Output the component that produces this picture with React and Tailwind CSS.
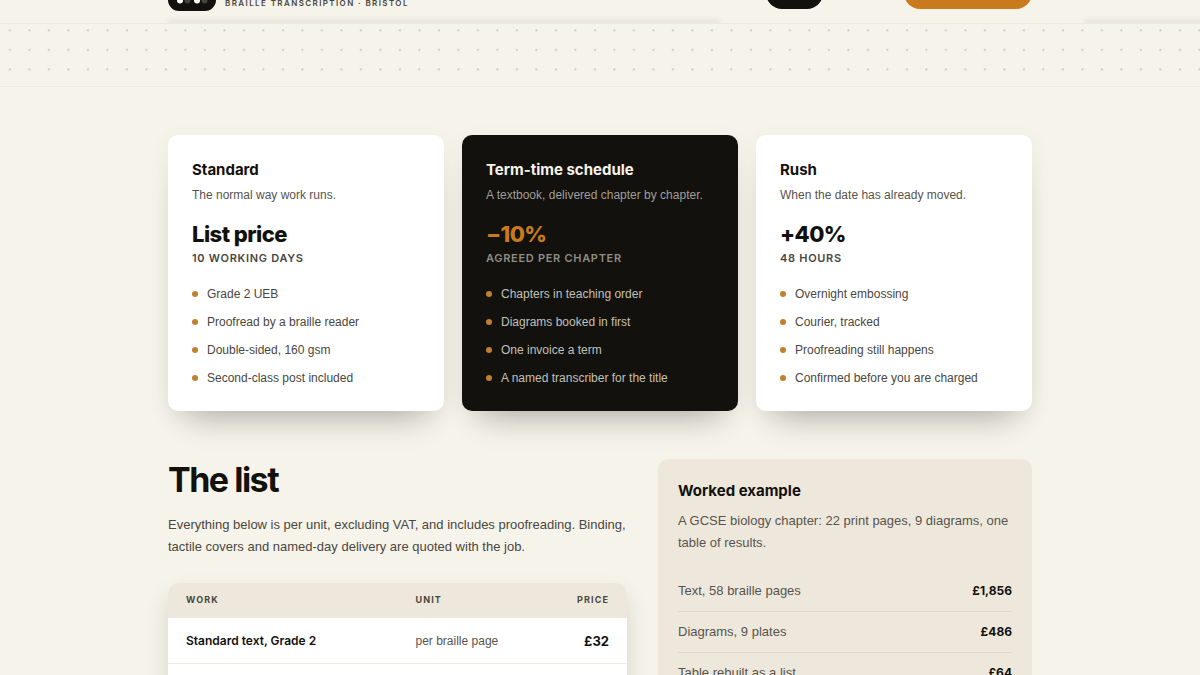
import React from "react";

const plans = [
  {
    name: "Standard",
    note: "The normal way work runs.",
    price: "List price",
    term: "10 working days",
    points: ["Grade 2 UEB", "Proofread by a braille reader", "Double-sided, 160 gsm", "Second-class post included"],
  },
  {
    name: "Term-time schedule",
    note: "A textbook, delivered chapter by chapter.",
    price: "−10%",
    term: "Agreed per chapter",
    points: ["Chapters in teaching order", "Diagrams booked in first", "One invoice a term", "A named transcriber for the title"],
    dark: true,
  },
  {
    name: "Rush",
    note: "When the date has already moved.",
    price: "+40%",
    term: "48 hours",
    points: ["Overnight embossing", "Courier, tracked", "Proofreading still happens", "Confirmed before you are charged"],
  },
];

const example = [
  ["Text, 58 braille pages", "£1,856"],
  ["Diagrams, 9 plates", "£486"],
  ["Table rebuilt as a list", "£64"],
];

function Header() {
  return (
    <header className="relative h-6 overflow-hidden border-b border-[#ece9e0]">
      <div className="absolute bottom-0 left-[168px] right-[480px] h-1 bg-linear-to-b from-transparent to-[#d3d0c7] blur-[2px]" />
      <div className="absolute bottom-0 left-[1085px] -right-2 h-1 bg-linear-to-b from-transparent to-[#d3d0c7] blur-[2px]" />
      <div className="relative mx-auto flex h-full max-w-[864px] items-end justify-between pb-3">
        <div className="flex items-end gap-[9px]">
          <svg width="48" height="48" viewBox="0 0 48 48" className="shrink-0">
            <rect width="48" height="48" rx="11" fill="#12110d" />
            <circle cx="12" cy="37.5" r="3" fill="#fff" />
            <circle cx="19.5" cy="37.5" r="3" fill="#45433e" />
            <circle cx="29" cy="37.5" r="3" fill="#fff" />
            <circle cx="36.5" cy="37.5" r="3" fill="#45433e" />
          </svg>
          <span className="text-[8px] leading-4 font-semibold tracking-[1.4px] text-[#4a4740] uppercase">
            Braille transcription · Bristol
          </span>
        </div>
        <div className="flex items-end gap-[81px] pb-0.5">
          <span className="h-8 w-[57px] rounded-2xl bg-[#12110d]" />
          <span className="h-9 w-[128px] rounded-2xl bg-[#c97a1d]" />
        </div>
      </div>
    </header>
  );
}

function DotBand() {
  return (
    <div className="border-b border-[#ece9e0]">
      <svg width="100%" height="62" className="block">
        <pattern id="dots" width="19.5" height="19.5" y="-3.5" patternUnits="userSpaceOnUse">
          <circle cx="9.9" cy="9.9" r="1.1" fill="#ccc8be" />
        </pattern>
        <rect width="100%" height="54" fill="url(#dots)" />
      </svg>
    </div>
  );
}

function Plan({ plan }) {
  const { name, note, price, term, points, dark } = plan;
  return (
    <article
      className={`rounded-[10px] p-6 pb-[23px] shadow-[0_24px_32px_-20px_rgba(18,17,13,0.3),0_6px_24px_rgba(18,17,13,0.05)] ${
        dark ? "bg-[#12110d] text-[#f6f3ea]" : "bg-white text-[#12110d]"
      }`}
    >
      <h3 className="text-[15px] leading-[22px] font-bold">{name}</h3>
      <p
        className={`mt-1 font-['Liberation_Sans',sans-serif] text-xs leading-5 ${
          dark ? "text-[#a19e97]" : "text-[#57544d]"
        }`}
      >
        {note}
      </p>
      <div className={`mt-[13px] text-[22px] leading-8 font-extrabold tracking-tight ${dark ? "text-[#c97a1d]" : ""}`}>
        {price}
      </div>
      <div
        className={`text-[11px] leading-4 font-semibold tracking-[0.7px] uppercase ${
          dark ? "text-[#8f8c85]" : "text-[#4a4740]"
        }`}
      >
        {term}
      </div>
      <ul
        className={`mt-[18px] font-['Liberation_Sans',sans-serif] text-xs leading-5 ${
          dark ? "text-[#c3c0b8]" : "text-[#4a4740]"
        }`}
      >
        {points.map((p) => (
          <li key={p} className="flex items-center gap-[9px] pb-2 last:pb-0">
            <span className="size-1.5 rounded-full bg-[#c0802f]" />
            {p}
          </li>
        ))}
      </ul>
    </article>
  );
}

export default function App() {
  return (
    <div className="h-screen overflow-hidden bg-[#f6f3ea] font-['Inter',sans-serif] text-[#12110d]">
      <Header />
      <DotBand />
      <main className="mx-auto max-w-[864px] pt-12">
        <section className="grid grid-cols-3 gap-[18px]">
          {plans.map((p) => (
            <Plan key={p.name} plan={p} />
          ))}
        </section>

        <section className="mt-12 grid grid-cols-[459fr_374fr] items-start gap-[31px]">
          <div>
            <h2 className="text-[34px] leading-[42px] font-bold tracking-[-1.5px]">The list</h2>
            <p className="mt-[13px] font-['Liberation_Sans',sans-serif] text-[13px] leading-[22px] text-[#4a4740]">
              Everything below is per unit, excluding VAT, and includes proofreading. Binding, tactile covers and
              named-day delivery are quoted with the job.
            </p>
            <div className="mt-[25px] overflow-hidden rounded-t-[10px] bg-white shadow-[0_12px_24px_rgba(18,17,13,0.12)]">
              <table className="w-full text-left">
                <thead className="bg-[#eee8dc] text-[9px] leading-4 tracking-[1.1px] text-[#4a4740] uppercase">
                  <tr>
                    <th className="w-1/2 px-[18px] pt-[9px] pb-[10px] font-bold">Work</th>
                    <th className="px-[18px] pt-[9px] pb-[10px] font-bold">Unit</th>
                    <th className="px-[18px] pt-[9px] pb-[10px] text-right font-bold">Price</th>
                  </tr>
                </thead>
                <tbody className="text-xs leading-5">
                  <tr className="border-b border-[#eeebe5]">
                    <td className="px-[18px] pt-[13px] pb-3 font-semibold">Standard text, Grade 2</td>
                    <td className="px-[18px] pt-[13px] pb-3 font-['Liberation_Sans',sans-serif] text-[#57544d]">
                      per braille page
                    </td>
                    <td className="px-[18px] pt-[13px] pb-3 text-right text-[13px] font-bold">£32</td>
                  </tr>
                  <tr>
                    <td className="h-12" colSpan={3} />
                  </tr>
                </tbody>
              </table>
            </div>
          </div>

          <aside className="rounded-[10px] bg-[#eee8dc] px-5 pt-[21px] pb-5">
            <h3 className="text-[15px] leading-[22px] font-bold">Worked example</h3>
            <p className="mt-2 font-['Liberation_Sans',sans-serif] text-[13px] leading-[22px] text-[#57544d]">
              A GCSE biology chapter: 22 print pages, 9 diagrams, one table of results.
            </p>
            <dl className="mt-[17px]">
              {example.map(([label, value]) => (
                <div key={label} className="flex justify-between border-b border-[#dfd9cc] py-[9px] text-[13px] leading-[22px]">
                  <dt className="font-['Liberation_Sans',sans-serif] text-[#57544d]">{label}</dt>
                  <dd className="text-xs leading-[22px] font-bold">{value}</dd>
                </div>
              ))}
            </dl>
          </aside>
        </section>
      </main>
    </div>
  );
}
